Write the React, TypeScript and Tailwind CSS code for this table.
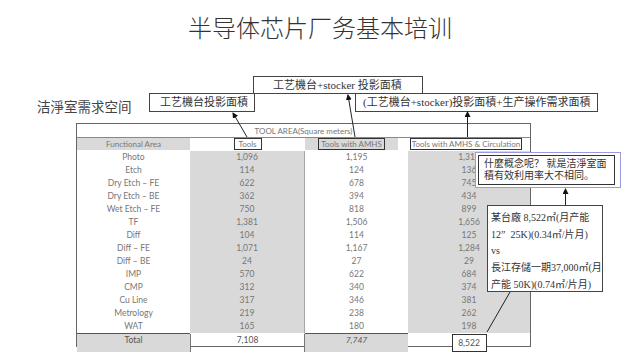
const rows: [string, string, string, string][] = [
  ["Photo", "1,096", "1,195", "1,314"],
  ["Etch", "114", "124", "136"],
  ["Dry Etch – FE", "622", "678", "745"],
  ["Dry Etch – BE", "362", "394", "434"],
  ["Wet Etch – FE", "750", "818", "899"],
  ["TF", "1,381", "1,506", "1,656"],
  ["Diff", "104", "114", "125"],
  ["Diff – FE", "1,071", "1,167", "1,284"],
  ["Diff – BE", "24", "27", "29"],
  ["IMP", "570", "622", "684"],
  ["CMP", "312", "340", "374"],
  ["Cu Line", "317", "346", "381"],
  ["Metrology", "219", "238", "262"],
  ["WAT", "165", "180", "198"],
];

const cols = "grid grid-cols-[113px_115px_103px_122px]";

function DataRow({ cells }: { cells: [string, string, string, string] }) {
  return (
    <div className={`${cols} h-[13px] leading-[13px] text-[8.5px]`}>
      <div className="text-center">{cells[0]}</div>
      <div className="text-center bg-[#d9d9d9] border-b border-white border-r border-r-[#a6a6a6]">{cells[1]}</div>
      <div className="text-center">{cells[2]}</div>
      <div className="text-center bg-[#d9d9d9] border-b border-white">{cells[3]}</div>
    </div>
  );
}

function HeadBox({ children, w }: { children: string; w: string }) {
  return (
    <span className={`${w} h-[12px] border border-[#333] flex items-center justify-center leading-none whitespace-nowrap`}>
      {children}
    </span>
  );
}

export default function App() {
  return (
    <div className="relative w-[640px] h-[360px] bg-white overflow-hidden font-['Noto_Sans_CJK_SC',sans-serif] text-[#222]">
      <div className="h-[56px] flex items-center justify-center text-[24px] leading-none text-[#333] font-light pb-[2px]">
        半导体芯片厂务基本培训
      </div>

      {/* labels above the table */}
      <div className="h-[67px] font-['Liberation_Serif','Noto_Sans_CJK_SC',serif] text-[11px] text-[#333]">
        <div className="pt-[20px] flex">
          <div className="ml-[253px] w-[170px] h-[18px] border border-[#444] flex items-center pl-[19px] whitespace-nowrap">
            工艺機台+stocker 投影面積
          </div>
        </div>
        <div className="flex items-start -mt-[1px]">
          <div className="ml-[37px] w-[112px] pt-[5px] text-[13.5px] leading-[16px] font-['Noto_Sans_CJK_SC',sans-serif] text-[#444]">
            洁淨室需求空间
          </div>
          <div className="w-[106px] h-[19px] border border-[#444] flex items-center pl-[10px] whitespace-nowrap">
            工艺機台投影面積
          </div>
          <div className="ml-[100px] w-[243px] h-[19px] border border-[#444] flex items-center pl-[7px] whitespace-nowrap">
            (工艺機台+stocker)投影面積+生产操作需求面積
          </div>
        </div>
      </div>

      {/* table */}
      <div className="ml-[76px] w-[455px] border border-[#666] font-['Lato',sans-serif] text-[8px] text-[#777]">
        <div className="h-[14px] leading-[14px] text-center border-b border-[#888] whitespace-nowrap">TOOL AREA(Square meters)</div>
        <div className={`${cols} h-[12px]`}>
          <div className="bg-[#d9d9d9] text-center leading-[12px]">Functional Area</div>
          <div className="flex justify-center">
            <HeadBox w="w-[28px]">Tools</HeadBox>
          </div>
          <div className="flex">
            <div className="w-[93px] bg-[#d9d9d9] flex justify-center">
              <HeadBox w="w-[67px]">Tools with AMHS</HeadBox>
            </div>
          </div>
          <div className="flex pl-[2px]">
            <HeadBox w="w-[112px]">Tools with AMHS &amp; Circulation</HeadBox>
          </div>
        </div>
        <div className="pt-[1px]">
          {rows.map((r) => (
            <DataRow key={r[0]} cells={r} />
          ))}
        </div>
        <div className={`${cols} h-[13px] leading-[13px] text-[8.5px] border-t border-[#555] text-[#555]`}>
          <div className="bg-[#d9d9d9] text-center">Total</div>
          <div className="text-center border-x border-[#777]">7,108</div>
          <div className="bg-[#d9d9d9] text-center italic">7,747</div>
          <div className="flex items-center justify-center">
            <span className="w-[35px] h-[18px] border border-[#333] bg-white flex items-center justify-center">
              8,522
            </span>
          </div>
        </div>
      </div>

      {/* callout 1 */}
      <div className="absolute left-[475px] top-[152px] w-[146px] h-[36px] border border-[#9a9ae0] bg-white">
        <div className="ml-[2px] mt-[2px] w-[137px] h-[30px] border border-[#333] px-[5px] pt-[2px] font-['Liberation_Serif','Noto_Sans_CJK_SC',serif] text-[10px] leading-[12px] text-[#333] whitespace-nowrap">
          <div>什麼概念呢？ 就是洁淨室面</div>
          <div>積有效利用率大不相同。</div>
        </div>
      </div>

      {/* callout 2 */}
      <div className="absolute left-[487px] top-[205px] w-[116px] h-[87px] border border-[#444] bg-white pl-[3px] pt-[4px] font-['Liberation_Serif','Noto_Sans_CJK_SC',serif] text-[10px] leading-[16.7px] text-[#333] whitespace-nowrap">
        <div>某台廠 8,522㎡(月产能</div>
        <div>12”&nbsp;&nbsp;25K)(0.34㎡/片月)</div>
        <div>vs</div>
        <div>長江存儲一期37,000㎡(月</div>
        <div>产能 50K)(0.74㎡/片月)</div>
      </div>

      {/* connector lines */}
      <svg className="absolute inset-0 pointer-events-none" width="640" height="360" viewBox="0 0 640 360">
        <defs>
          <marker id="ah" markerWidth="6" markerHeight="6" refX="5" refY="3" orient="auto" markerUnits="userSpaceOnUse">
            <path d="M0,0 L6,3 L0,6 Z" fill="#111" />
          </marker>
        </defs>
        <g stroke="#222" strokeWidth="1" fill="none">
          <line x1="247" y1="137" x2="233" y2="113" markerEnd="url(#ah)" />
          <line x1="355" y1="137" x2="348" y2="95" markerEnd="url(#ah)" />
          <line x1="467.5" y1="137" x2="467.5" y2="112" markerEnd="url(#ah)" />
          <line x1="565.5" y1="205" x2="565.5" y2="189" markerEnd="url(#ah)" />
          <line x1="487" y1="332" x2="510" y2="292" />
        </g>
      </svg>
    </div>
  );
}
